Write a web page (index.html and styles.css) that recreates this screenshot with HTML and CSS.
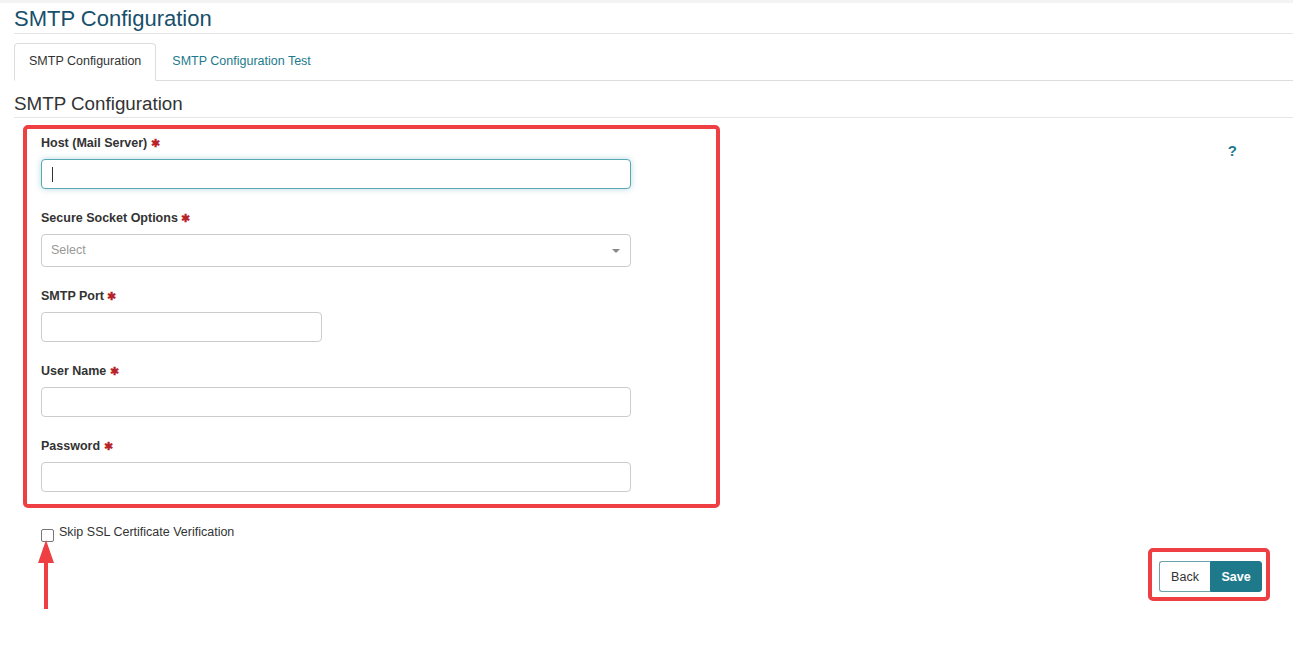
FILE: index.html
```html
<!DOCTYPE html>
<html>
<head>
<meta charset="utf-8">
<title>SMTP Configuration</title>
<link rel="stylesheet" href="styles.css">
</head>
<body>
<div class="topstrip"></div>
<div class="page">
  <h1 class="page-title">SMTP Configuration</h1>
  <ul class="tabs">
    <li class="tab active">SMTP Configuration</li>
    <li class="tab">SMTP Configuration Test</li>
  </ul>
  <h2 class="section-title">SMTP Configuration</h2>

  <div class="form-row">
    <div class="annot-box form-box">
      <div class="group">
        <label class="lbl">Host (Mail Server) <span class="req">&#10033;</span></label>
        <div class="field wide focused"><span class="caret"></span></div>
      </div>
      <div class="group">
        <label class="lbl">Secure Socket Options <span class="req">&#10033;</span></label>
        <div class="field wide select"><span class="placeholder">Select</span><span class="tri"></span></div>
      </div>
      <div class="group">
        <label class="lbl">SMTP Port <span class="req">&#10033;</span></label>
        <div class="field narrow"></div>
      </div>
      <div class="group">
        <label class="lbl">User Name <span class="req">&#10033;</span></label>
        <div class="field wide"></div>
      </div>
      <div class="group">
        <label class="lbl">Password <span class="req">&#10033;</span></label>
        <div class="field wide"></div>
      </div>
    </div>
    <div class="help">?</div>
  </div>

  <div class="check-row">
    <span class="checkbox"></span>
    <span class="check-label">Skip SSL Certificate Verification</span>
  </div>

  <div class="actions">
    <div class="annot-box btn-box">
      <button class="btn btn-back">Back</button><button class="btn btn-save">Save</button>
    </div>
  </div>
</div>

<svg class="arrow" width="18" height="72" viewBox="0 0 18 72">
  <polygon points="8,0 0,23 16,23" fill="#ee3f43"/>
  <rect x="6" y="18" width="4" height="51" fill="#ee3f43"/>
</svg>
</body>
</html>
```

FILE: styles.css
```css
* { box-sizing: border-box; }

html, body {
  margin: 0;
  padding: 0;
  background: #fff;
}

body {
  font-family: "Liberation Sans", Arial, sans-serif;
  font-size: 12.5px;
  line-height: 18px;
  color: #333;
  position: relative;
  width: 1293px;
  height: 646px;
  overflow: hidden;
}

.topstrip {
  height: 3px;
  background: #f3f3f3;
}

.page {
  padding-left: 14px;
}

.page-title {
  margin: 4px 0 0;
  font-size: 22px;
  font-weight: normal;
  line-height: 24px;
  color: #17506a;
  padding-bottom: 2px;
  border-bottom: 1px solid #e5e5e5;
}

.tabs {
  list-style: none;
  margin: 9px 0 0;
  padding: 0;
  display: flex;
  border-bottom: 1px solid #dddddd;
}

.tab {
  padding: 8px 14px 10px;
  margin-right: 1px;
  margin-bottom: -1px;
  border: 1px solid transparent;
  border-radius: 4px 4px 0 0;
  color: #1d7a8c;
  line-height: 18px;
}

.tab.active {
  color: #333;
  border-color: #dddddd;
  border-bottom-color: #fff;
  background: #fff;
}

.section-title {
  margin: 12px 0 0;
  font-size: 18.8px;
  font-weight: normal;
  line-height: 22px;
  color: #333;
  padding-bottom: 2px;
  border-bottom: 1px solid #e5e5e5;
}

.form-row {
  display: flex;
  justify-content: space-between;
  align-items: flex-start;
  margin-top: 7px;
}

.annot-box {
  border: 4px solid #ee3f43;
  border-radius: 5px;
}

.form-box {
  margin-left: 9px;
  width: 697px;
  padding: 5px 10px 12px 14px;
  display: flex;
  flex-direction: column;
  gap: 20px;
}

.group {
  display: flex;
  flex-direction: column;
  align-items: flex-start;
}

.lbl {
  display: block;
  height: 18px;
  font-weight: bold;
  line-height: 18px;
  margin-bottom: 7px;
  color: #333;
}

.req {
  color: #b8232a;
  font-size: 10.5px;
  line-height: 0;
  font-weight: bold;
}

.field {
  height: 30px;
  border: 1px solid #cccccc;
  border-radius: 4px;
  background: #fff;
  position: relative;
  display: flex;
  align-items: center;
}

.field.wide { width: 590px; }
.field.narrow { width: 281px; }

.field.focused {
  border-color: #5aa7b4;
  box-shadow: 0 0 6px rgba(60, 150, 170, 0.35);
}

.caret {
  display: block;
  width: 1px;
  height: 15px;
  background: #333;
  margin-left: 10px;
}

.field.select {
  height: 33px;
  justify-content: space-between;
  padding: 0 10px 0 9px;
}

.placeholder {
  color: #999;
  margin-top: -2px;
}

.tri {
  width: 0;
  height: 0;
  border-left: 4px solid transparent;
  border-right: 4px solid transparent;
  border-top: 4px solid #888;
}

.help {
  margin-top: 17px;
  margin-right: 56px;
  font-size: 15px;
  font-weight: bold;
  line-height: 18px;
  color: #1d7a8c;
}

.check-row {
  display: flex;
  align-items: flex-start;
  margin: 15px 0 0 27px;
  gap: 5px;
}

.checkbox {
  width: 13px;
  height: 13px;
  margin-top: 6px;
  border: 1px solid #767676;
  border-radius: 2px;
  background: #fff;
}

.check-label {
  line-height: 18px;
  color: #333;
}

.actions {
  display: flex;
  justify-content: flex-end;
  margin-top: 6px;
  padding-right: 23px;
}

.btn-box {
  width: 122px;
  height: 53px;
  padding: 9px 3px 4px 7px;
  display: flex;
  align-items: flex-start;
}

.btn {
  font-family: "Liberation Sans", Arial, sans-serif;
  font-size: 12.5px;
  height: 31px;
  margin: 0;
  cursor: pointer;
  line-height: 18px;
}

.btn-back {
  width: 51px;
  background: #fff;
  color: #333;
  border: 1px solid #6aa2ad;
  border-right: none;
  border-radius: 3px 0 0 3px;
}

.btn-save {
  width: 52px;
  background: #1e7a8b;
  color: #fff;
  font-weight: bold;
  border: 1px solid #1e7a8b;
  border-radius: 0 3px 3px 0;
}

.arrow {
  position: absolute;
  left: 38px;
  top: 540px;
}
```
